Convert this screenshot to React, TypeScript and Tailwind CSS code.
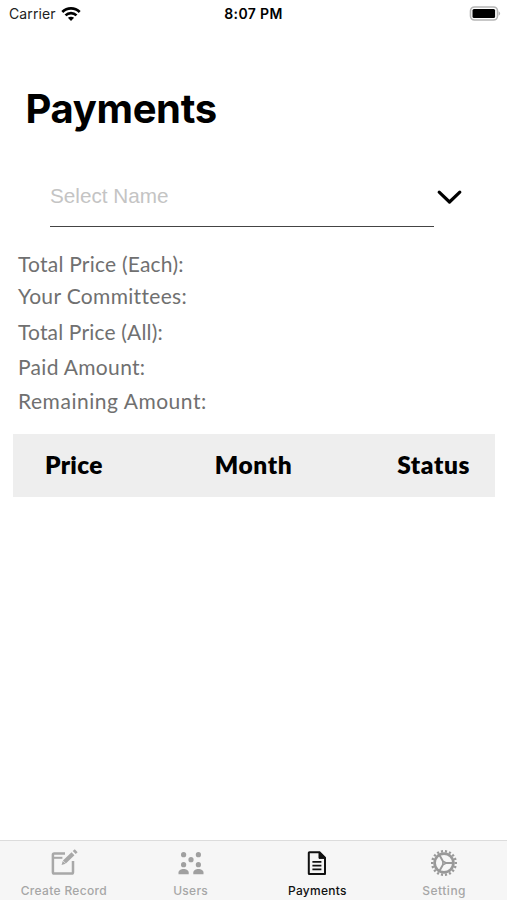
import React from "react";

const details = [
  { label: "Total Price (Each):", style: "h-[32px] tracking-[0.22px]" },
  { label: "Your Committees:", style: "h-[36px] tracking-[0.33px]" },
  { label: "Total Price (All):", style: "h-[35px] tracking-[0.17px]" },
  { label: "Paid Amount:", style: "h-[34px] tracking-[0.32px]" },
  { label: "Remaining Amount:", style: "h-[35px] tracking-[0.53px]" },
];

function WifiIcon() {
  return (
    <svg width="20" height="15" viewBox="0 0 20 15" fill="none" stroke="#000" strokeWidth="2.7">
      <path d="M1.3 5C6.2.2 13.8.2 18.7 5" />
      <path d="M4.5 8.4C7.6 5.4 12.4 5.4 15.5 8.4" />
      <path d="M6.9 10.8L10 14L13.1 10.8C11.3 9.3 8.7 9.3 6.9 10.8Z" fill="#000" stroke="none" />
    </svg>
  );
}

function BatteryIcon() {
  return (
    <svg width="32" height="16" viewBox="0 0 32 16">
      <rect x="1.5" y="1" width="27" height="13" rx="4" fill="#fff" stroke="#b5b5b5" strokeWidth="1.6" />
      <rect x="3.5" y="3" width="22.6" height="9" rx="1.5" fill="#000" />
      <path d="M29.6 5.2C31.7 6.2 31.7 8.8 29.6 9.8Z" fill="#b5b5b5" />
    </svg>
  );
}

function ComposeIcon() {
  return (
    <svg className="ml-[3px]" width="28" height="28" viewBox="0 0 28 28" fill="none" stroke="#a8a8a8" strokeWidth="2.5">
      <path d="M14 4.5H3.2Q1.9 4.5 1.9 5.8V23.3Q1.9 24.6 3.2 24.6H20.7Q22 24.6 22 23.3V12" />
      <path d="M3 8.8H11.4" strokeWidth="2" />
      <path d="M13.4 13.1L22 4.8" strokeWidth="4.2" />
      <path d="M10.6 15.9L11.7 11.9L14.6 14.8Z" fill="#a8a8a8" stroke="none" />
      <path d="M23.2 3.6L25.2 1.7" strokeWidth="4.2" />
    </svg>
  );
}

function UsersIcon() {
  return (
    <svg className="ml-px" width="28" height="28" viewBox="0 0 28 28" fill="#a0a0a0">
      <circle cx="6.6" cy="5.7" r="2.6" />
      <circle cx="21.4" cy="5.7" r="2.6" />
      <circle cx="14" cy="10.7" r="2.6" />
      <circle cx="6.6" cy="15.7" r="2.6" />
      <circle cx="21.4" cy="15.7" r="2.6" />
      <path d="M1.5 25.3V23.6C1.5 18.9 11.7 18.9 11.7 23.6V25.3Z" />
      <path d="M16.3 25.3V23.6C16.3 18.9 26.5 18.9 26.5 23.6V25.3Z" />
    </svg>
  );
}

function DocumentIcon() {
  return (
    <svg width="28" height="28" viewBox="0 0 28 28" fill="none" stroke="#111" strokeWidth="2">
      <path d="M6.4 3.2H16.5L22 8.7V25H6.4Q5.8 25 5.8 24.4V3.8Q5.8 3.2 6.4 3.2Z" strokeLinejoin="round" />
      <path d="M16 3V9.4H22.2L21 7.6L17.6 4.2Z" fill="#111" strokeWidth="1" />
      <path d="M9.4 12.9H18.4M9.4 16.6H18.4M9.4 20.3H18.4" strokeWidth="1.8" />
    </svg>
  );
}

function GearIcon() {
  return (
    <svg width="28" height="28" viewBox="0 0 28 28" fill="none" stroke="#999">
      <circle cx="14" cy="14" r="11.8" strokeWidth="2.4" pathLength="180" strokeDasharray="5.2 4.8" strokeDashoffset="2.6" />
      <circle cx="14" cy="14" r="9.4" strokeWidth="2.7" />
      <path d="M14.5 14H23M13.5 13.3L9.4 6M13.5 14.7L9.4 22" strokeWidth="1.9" />
      <circle cx="14" cy="14" r="1.3" strokeWidth="1.4" />
    </svg>
  );
}

const tabs = [
  { label: "Create Record", Icon: ComposeIcon, style: "text-[#a6a6a6] tracking-[0.32px]" },
  { label: "Users", Icon: UsersIcon, style: "text-[#a6a6a6] tracking-[0.3px]" },
  { label: "Payments", Icon: DocumentIcon, style: "text-[#111] tracking-[0.25px]" },
  { label: "Setting", Icon: GearIcon, style: "text-[#a6a6a6] tracking-[0.5px]" },
];

export default function App() {
  return (
    <div className="flex h-[900px] w-[507px] flex-col overflow-hidden bg-white font-['Inter',sans-serif] text-black">
      <header className="grid h-[28px] shrink-0 grid-cols-3 items-center px-[6px]">
        <div className="flex items-center gap-[5px] pl-[3px] text-[14px] leading-[28px] text-[#222]">
          <span className="tracking-[0.1px]">Carrier</span>
          <WifiIcon />
        </div>
        <span className="text-center text-[14px] font-semibold leading-[28px] tracking-[0.35px]">8:07 PM</span>
        <div className="flex justify-end"><BatteryIcon /></div>
      </header>

      <h1 className="mt-[56px] h-[50px] pl-[25.5px] text-[40px] font-bold leading-[50px] tracking-[-0.35px]">Payments</h1>

      <div className="mt-[34px] flex h-[59px] pl-[50px]">
        <div className="w-[384px] border-b-[1.5px] border-[#444] font-['Liberation_Sans',sans-serif] text-[20.7px] leading-[56px] text-[#c4c4c4]">
          Select Name
        </div>
        <svg className="ml-[2px] mt-[20px]" width="28" height="20" viewBox="0 0 28 20" fill="none" stroke="#000" strokeWidth="3.2" strokeLinecap="round" strokeLinejoin="round">
          <path d="M3.2 4.2L13.5 14L23.8 4.2" />
        </svg>
      </div>

      <section className="mt-[21px] flex h-[186px] flex-col pl-[18px] font-['Lato',sans-serif] text-[21px] leading-[32px] text-[#707070]">
        {details.map(({ label, style }) => (
          <div key={label} className={style}><span>{label}</span></div>
        ))}
      </section>

      <div className="ml-[13px] flex h-[63px] w-[482px] items-center justify-between bg-[#eee] pl-[32px] pr-[25px] font-['Lato',sans-serif] text-[24.5px] font-extrabold leading-[62px]">
        <span className="-mt-[1px] tracking-[0.3px]">Price</span>
        <span className="-mt-[1px] ml-[7px] tracking-[0.6px]">Month</span>
        <span className="-mt-[1px] tracking-[0.6px]">Status</span>
      </div>

      <nav className="mt-auto grid h-[60px] grid-cols-4 border-t-[1.5px] border-[#dcdcdc] bg-[#f6f6f6]">
        {tabs.map(({ label, Icon, style }) => (
          <div key={label} className="flex flex-col items-center pl-px pt-[8px]">
            <Icon />
            <span className={`mt-[6px] whitespace-nowrap text-[12px] font-medium leading-[16px] ${style}`}>{label}</span>
          </div>
        ))}
      </nav>
    </div>
  );
}
